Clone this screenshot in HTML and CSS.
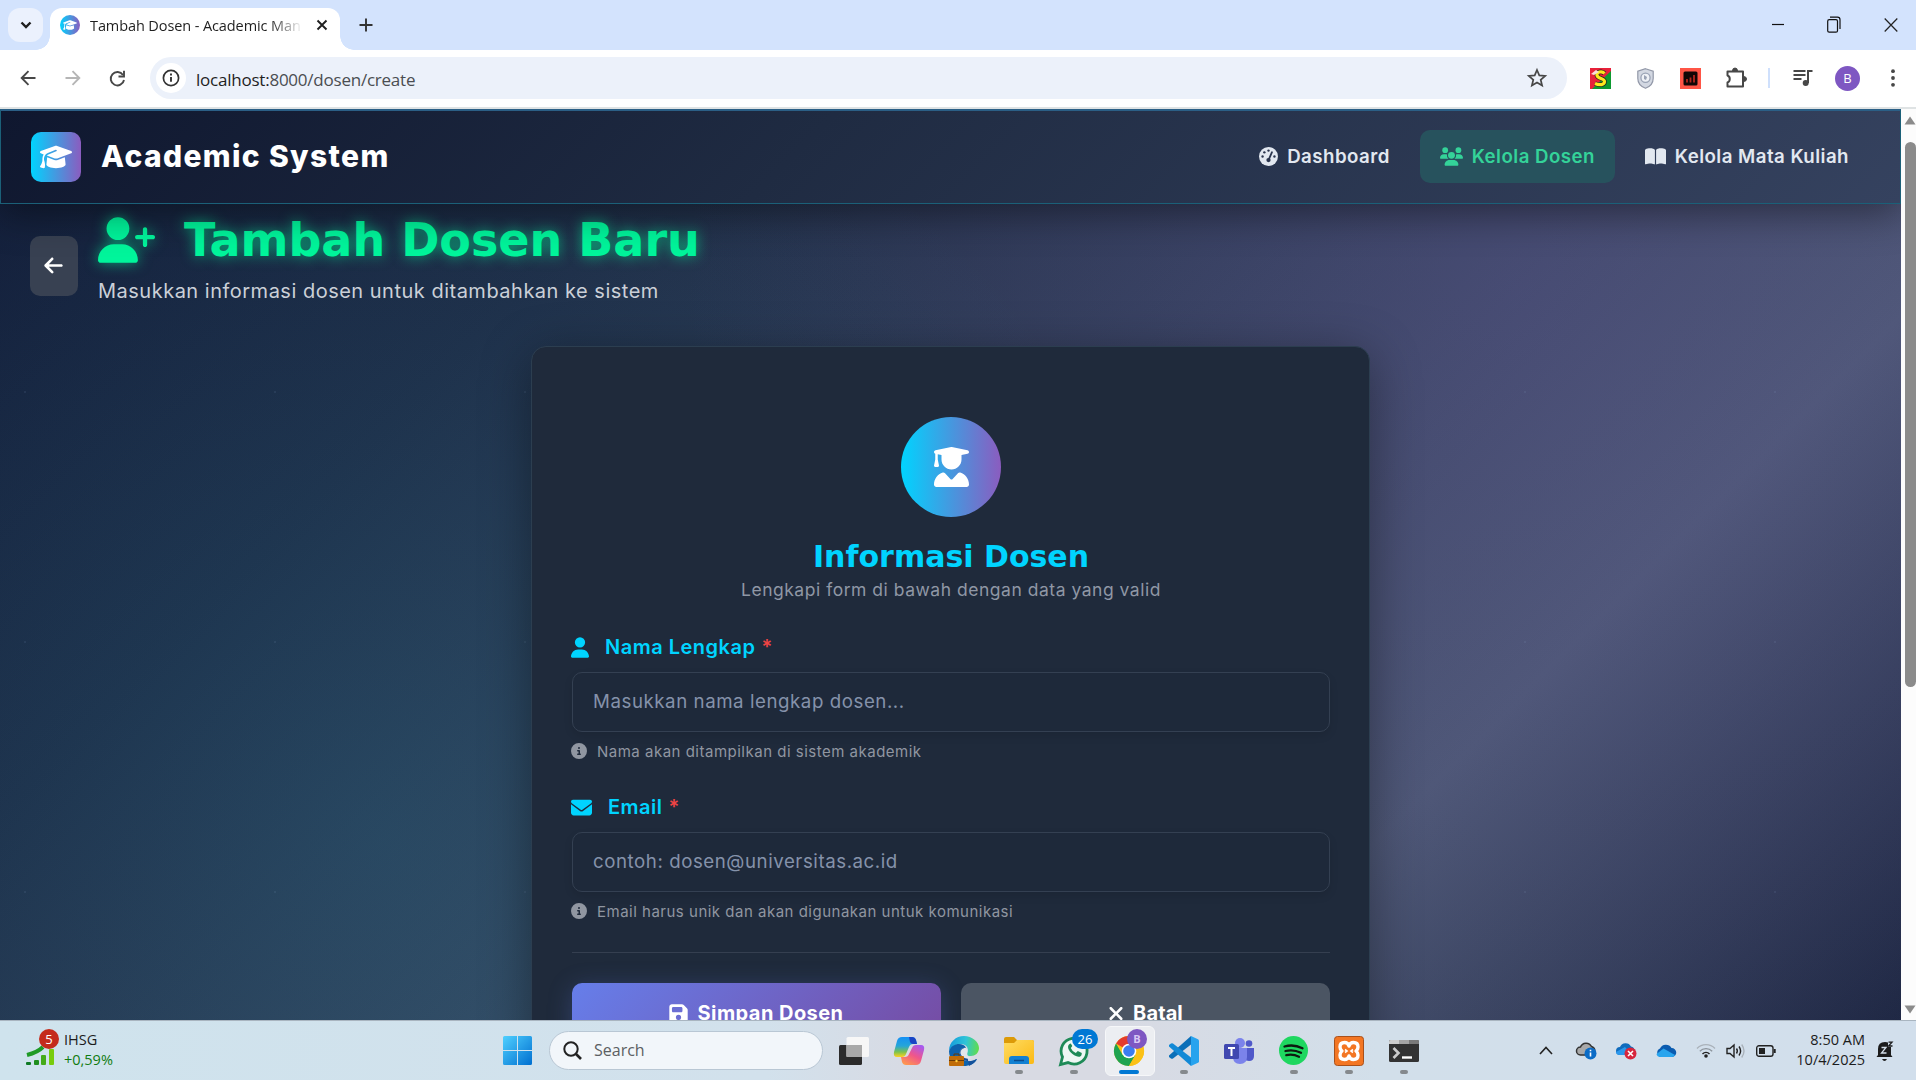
FILE: index.html
```html
<!DOCTYPE html>
<html lang="id">
<head>
<meta charset="utf-8">
<title>Tambah Dosen - Academic Management System</title>
<link rel="stylesheet" href="styles.css">
</head>
<body>
<svg class="defs" aria-hidden="true">
  <defs>
    <symbol id="cap" viewBox="0 0 640 512"><path d="M320 32c-8.1 0-16.1 1.4-23.7 4.1L15.8 137.4C6.3 140.9 0 149.9 0 160s6.3 19.1 15.8 22.6l57.9 20.9C57.3 229.3 48 259.8 48 291.9v28.1c0 28.4-10.8 57.7-22.3 80.8c-6.5 13-13.9 25.8-22.5 37.6C0 442.7-.9 448.3 .9 453.4s6 8.9 11.2 10.2l64 16c4.2 1.1 8.7 .3 12.4-2s6.3-6.1 7.1-10.4c8.6-42.8 4.3-81.2-2.1-108.7C90.3 344.3 86 329.8 80 316.5V291.9c0-30.2 10.2-58.7 27.9-81.5c12.9-15.5 29.6-28 49.2-35.7l157-61.7c8.2-3.2 17.5 .8 20.7 9s-.8 17.5-9 20.7l-157 61.7c-12.4 4.9-23.3 12.4-32.2 21.6l159.6 57.6c7.6 2.7 15.6 4.1 23.7 4.1s16.1-1.4 23.7-4.1L624.2 182.6c9.5-3.4 15.8-12.5 15.8-22.6s-6.3-19.1-15.8-22.6L343.7 36.1C336.1 33.4 328.1 32 320 32zM128 408c0 35.3 86 72 192 72s192-36.7 192-72L496.7 262.6 354.5 314c-11.1 4-22.8 6-34.5 6s-23.5-2-34.5-6L143.3 262.6 128 408z"/></symbol>
    <symbol id="info" viewBox="0 0 512 512"><path d="M256 512A256 256 0 1 0 256 0a256 256 0 1 0 0 512zM216 336h24V272H216c-13.3 0-24-10.7-24-24s10.7-24 24-24h48c13.3 0 24 10.7 24 24v88h8c13.3 0 24 10.7 24 24s-10.7 24-24 24H216c-13.3 0-24-10.7-24-24s10.7-24 24-24zm40-208a32 32 0 1 1 0 64 32 32 0 1 1 0-64z"/></symbol>
    <linearGradient id="brand" x1="0" y1="0" x2="1" y2="0"><stop offset="0" stop-color="#00d4ff"/><stop offset="1" stop-color="#8b5cbf"/></linearGradient>
    <linearGradient id="winblue" x1="0" y1="0" x2="1" y2="1"><stop offset="0" stop-color="#4fd0ff"/><stop offset="1" stop-color="#006fd0"/></linearGradient>
    <linearGradient id="cop1" x1="0" y1="0" x2="0" y2="1"><stop offset="0" stop-color="#1590f5"/><stop offset=".45" stop-color="#26a5d8"/><stop offset=".75" stop-color="#7cc24e"/><stop offset="1" stop-color="#ffd21e"/></linearGradient>
    <linearGradient id="cop2" x1=".8" y1="0" x2=".2" y2="1"><stop offset="0" stop-color="#a65af0"/><stop offset=".5" stop-color="#f0568a"/><stop offset="1" stop-color="#ff9a4d"/></linearGradient>
    <linearGradient id="edge1" x1="0" y1=".3" x2="1" y2=".4"><stop offset="0" stop-color="#159bdc"/><stop offset=".55" stop-color="#2fc4d8"/><stop offset="1" stop-color="#5fdc50"/></linearGradient>
    <linearGradient id="folder" x1="0" y1="0" x2="1" y2="1"><stop offset="0" stop-color="#ffdc62"/><stop offset="1" stop-color="#fbb914"/></linearGradient>
  </defs>
</svg>

<div class="tabstrip">
  <div class="tab-search"><svg width="12" height="8" viewBox="0 0 12 8"><path d="M1.500 1.500 6 6l4.500-4.500" fill="none" stroke="#1f1f1f" stroke-width="2.400"/></svg></div>
  <div class="tab">
    <svg class="favicon" width="20" height="20" viewBox="0 0 20 20"><circle cx="10" cy="10" r="10" fill="url(#brand)"/><use href="#cap" x="3" y="4.500" width="14" height="11" fill="#fff"/></svg>
    <span class="tab-title">Tambah Dosen - Academic Man</span>
    <svg width="12" height="12" viewBox="0 0 12 12"><path d="M1.500 1.500l9 9m0-9l-9 9" stroke="#1f1f1f" stroke-width="1.900"/></svg>
  </div>
  <svg class="new-tab" width="14" height="14" viewBox="0 0 14 14"><path d="M7 .5v13M.5 7h13" stroke="#333" stroke-width="1.900"/></svg>
  <div class="window-controls">
    <svg width="12" height="13" viewBox="0 0 12 13"><path d="M0 5.500h12" stroke="#111" stroke-width="1.200"/></svg>
    <svg width="14" height="18" viewBox="0 0 14 18"><rect x=".7" y="3.700" width="9.800" height="12.500" rx="1.500" fill="none" stroke="#111" stroke-width="1.200"/><path d="M3 1.200h7.500q2.500 0 2.500 2.500V13" fill="none" stroke="#111" stroke-width="1.200"/></svg>
    <svg width="14" height="17" viewBox="0 0 14 17"><path d="M.7 1.500l12.600 13M13.300 1.500L.7 14.500" stroke="#222" stroke-width="1.200"/></svg>
  </div>
</div>

<div class="toolbar">
  <span class="slot"><svg width="16" height="16" viewBox="0 0 16 16"><path d="M15.500 8H2M8.500 1.200 1.700 8l6.800 6.800" fill="none" stroke="#474747" stroke-width="1.900"/></svg></span>
  <span class="slot"><svg width="16" height="16" viewBox="0 0 16 16"><path d="M.5 8H14M7.500 1.200 14.300 8l-6.800 6.800" fill="none" stroke="#b5b5b5" stroke-width="1.900"/></svg></span>
  <span class="slot"><svg width="17" height="17" viewBox="0 0 17 17"><path d="M14 5A6.700 6.700 0 1 0 15 10" fill="none" stroke="#474747" stroke-width="1.900"/><path d="M15 .8V6.500H9.500" fill="none" stroke="#474747" stroke-width="1.900"/></svg></span>
  <div class="omnibox">
    <span class="site-info"><svg width="18" height="18" viewBox="0 0 18 18"><circle cx="9" cy="9" r="7.600" fill="none" stroke="#333" stroke-width="1.700"/><path d="M9 8v4.800M9 4.600v1.900" stroke="#333" stroke-width="1.900"/></svg></span>
    <span class="url"><b>localhost:</b>8000/dosen/create</span>
    <svg class="star" width="20" height="20" viewBox="0 0 20 20"><path d="M10 2l2.300 5.400 5.900.5-4.500 3.900 1.400 5.700L10 14.500l-5.100 3 1.400-5.700L1.800 7.900l5.900-.5z" fill="none" stroke="#474747" stroke-width="1.700"/></svg>
  </div>
  <span class="slot"><svg width="21" height="21" viewBox="0 0 21 21"><path d="M0 0h21v21H0z" fill="#e8213a"/><path d="M21 3v18H2z" fill="#0d9a30"/><path d="M14.500 5.500C12 2.500 6 4 7 7.500s7.500 2.500 7.500 6-5 4-9.500 2" fill="none" stroke="#222" stroke-width="4.600"/><path d="M14.500 5.500C12 2.500 6 4 7 7.500s7.500 2.500 7.500 6-5 4-9.500 2" fill="none" stroke="#ffe81c" stroke-width="3.200"/><path d="M1 6l5-4 3 2-5 3z" fill="#f8dcd8"/></svg></span>
  <span class="slot"><svg width="17" height="21" viewBox="0 0 17 21"><path d="M8.500.7l7.700 2.600v7c0 5-3.500 8.500-7.700 10C4.300 18.800.8 15.300.8 10.300v-7z" fill="#d3d8e2" stroke="#9298a8" stroke-width="1.200"/><circle cx="8.500" cy="9.700" r="4.600" fill="#eef1f6" stroke="#9aa3b5" stroke-width="1.300"/><path d="M7 7l3 2-1 3-2-1z" fill="#9aa3b5"/></svg></span>
  <span class="slot"><svg width="21" height="21" viewBox="0 0 21 21"><rect width="21" height="21" fill="#ff5546"/><rect x="3.500" y="3.500" width="14" height="14" rx="1.500" fill="#120606"/><path d="M7 11v3.500M10.500 9.500v5M14 7v7.500" stroke="#b3261e" stroke-width="1.800"/></svg></span>
  <span class="slot"><svg width="22" height="22" viewBox="0 0 22 22"><path d="M2.500 4.500H18V19.500H2.500V15.500C5.500 14.500 5.500 9.500 2.500 8.500z" fill="none" stroke="#474747" stroke-width="2" stroke-linejoin="round"/><path d="M7.500 4a2.500 3 0 0 1 5 0M18.500 9.500a3 2.500 0 0 1 0 5" fill="#474747" stroke="#474747"/></svg></span>
  <span class="divider"></span>
  <span class="slot"><svg width="20" height="18" viewBox="0 0 20 18"><path d="M.5 2h12M.5 6h12M.5 10h8" stroke="#474747" stroke-width="1.900"/><path d="M15 14V2h4.500" fill="none" stroke="#474747" stroke-width="2"/><circle cx="12.700" cy="14" r="3" fill="#474747"/></svg></span>
  <span class="slot"><span class="avatar">B</span></span>
  <span class="slot"><svg width="4" height="18" viewBox="0 0 4 18"><circle cx="2" cy="2.200" r="1.900" fill="#474747"/><circle cx="2" cy="9" r="1.900" fill="#474747"/><circle cx="2" cy="15.800" r="1.900" fill="#474747"/></svg></span>
</div>

<div class="viewport">
  <div class="page">
    <nav class="navbar">
      <span class="logo"><svg width="32" height="26" fill="#fff"><use href="#cap"/></svg></span>
      <span class="brand">Academic System</span>
      <div class="links">
        <a class="link link-dashboard"><svg width="19" height="19" viewBox="0 0 512 512"><circle cx="256" cy="256" r="256" fill="currentColor"/><g fill="#29344d"><circle cx="256" cy="96" r="32"/><circle cx="144" cy="144" r="32"/><circle cx="96" cy="256" r="32"/><circle cx="416" cy="256" r="32"/><circle cx="256" cy="352" r="58"/></g><path d="M256 352 350 140" stroke="#29344d" stroke-width="48" stroke-linecap="round"/></svg><span>Dashboard</span></a>
        <a class="link link-active"><svg width="23" height="19" viewBox="0 0 640 512" fill="currentColor"><circle cx="144" cy="80" r="80"/><circle cx="512" cy="80" r="80"/><path d="M0 298.700C0 239.800 47.800 192 106.700 192h42.700c15.900 0 31 3.500 44.600 9.700a128 128 0 0 0 40.700 118.300H21.300C9.600 320 0 310.400 0 298.700zM405.300 320h.7a128 128 0 0 0 40.700-118.300c13.600-6.300 28.700-9.700 44.600-9.700h42.700C592.200 192 640 239.800 640 298.700c0 11.800-9.600 21.300-21.300 21.300z"/><circle cx="320" cy="224" r="96"/><path d="M128 485.300C128 411.700 187.700 352 261.300 352h117.300C452.300 352 512 411.700 512 485.300c0 14.700-11.900 26.700-26.700 26.700H154.700c-14.700 0-26.700-11.900-26.700-26.700z"/></svg><span>Kelola Dosen</span></a>
        <a class="link link-courses"><svg width="21" height="19" viewBox="0 0 576 512" fill="currentColor"><path d="M249.600 471.500c10.800 3.800 22.400-4.100 22.400-15.500V78.600c0-4.200-1.600-8.400-5-11C247.400 52 202.400 32 144 32C93.500 32 46.300 45.300 18.100 56.100C6.800 60.500 0 71.700 0 83.800V454.100c0 11.900 12.800 20.200 24.100 16.500C55.600 460.100 105.500 448 144 448c33.900 0 79 14 105.600 23.500zm76.800 0C353 462 398.100 448 432 448c38.500 0 88.400 12.100 119.900 22.600c11.300 3.800 24.100-4.600 24.100-16.500V83.800c0-12.100-6.800-23.300-18.100-27.600C529.700 45.300 482.500 32 432 32c-58.400 0-103.400 20-123 35.600c-3.300 2.600-5 6.800-5 11V456c0 11.400 11.700 19.300 22.400 15.500z"/></svg><span>Kelola Mata Kuliah</span></a>
      </div>
    </nav>

    <header class="page-head">
      <a class="back"><svg width="19" height="21" viewBox="0 0 448 512" fill="#fff"><path d="M9.400 233.400c-12.500 12.500-12.500 32.800 0 45.300l160 160c12.500 12.500 32.800 12.500 45.300 0s12.500-32.800 0-45.300L109.200 288 416 288c17.700 0 32-14.300 32-32s-14.300-32-32-32l-306.700 0L214.600 118.600c12.500-12.500 12.500-32.800 0-45.300s-32.800-12.500-45.300 0l-160 160z"/></svg></a>
      <div>
        <h1><svg width="57" height="46" viewBox="0 0 640 512" fill="#00f59b"><path d="M96 128a128 128 0 1 1 256 0A128 128 0 1 1 96 128zM0 482.300C0 383.800 79.800 304 178.300 304h91.400C368.200 304 448 383.800 448 482.300c0 16.400-13.300 29.700-29.700 29.700H29.700C13.300 512 0 498.700 0 482.300zM504 312V248H440c-13.300 0-24-10.700-24-24s10.700-24 24-24h64V136c0-13.300 10.700-24 24-24s24 10.700 24 24v64h64c13.300 0 24 10.700 24 24s-10.700 24-24 24H552v64c0 13.300-10.700 24-24 24s-24-10.700-24-24z"/></svg><span>Tambah Dosen Baru</span></h1>
        <p class="lead">Masukkan informasi dosen untuk ditambahkan ke sistem</p>
      </div>
    </header>

    <main class="card">
      <div class="badge"><svg width="35" height="40" viewBox="0 0 448 512" fill="#fff"><path d="M219.300 .5c3.100-.6 6.300-.6 9.400 0l200 40C439.900 42.700 448 52.600 448 64s-8.100 21.300-19.300 23.500L352 102.900V160c0 70.700-57.300 128-128 128s-128-57.300-128-128V102.900L48 93.300v65.100l15.700 78.400c.9 4.700-.3 9.600-3.300 13.300s-7.600 5.900-12.400 5.900H16c-4.800 0-9.300-2.100-12.400-5.900s-4.300-8.600-3.300-13.300L16 158.400V86.600C6.500 83.300 0 74.300 0 64C0 52.600 8.100 42.700 19.300 40.500l200-40zM111.900 327.700c10.500-3.400 21.800 .4 29.400 8.500l71 75.500c6.300 6.700 17 6.700 23.300 0l71-75.500c7.600-8.100 18.900-11.900 29.400-8.500C401 348.600 448 409.400 448 481.300c0 17-13.800 30.700-30.700 30.700H30.700C13.800 512 0 498.200 0 481.300c0-71.900 47-132.700 111.900-153.600z"/></svg></div>
      <h2>Informasi Dosen</h2>
      <p class="card-sub">Lengkapi form di bawah dengan data yang valid</p>

      <div class="field">
        <div class="label"><svg width="18" height="21" viewBox="0 0 448 512" fill="currentColor"><path d="M224 256A128 128 0 1 0 224 0a128 128 0 1 0 0 256zm-45.700 48C79.800 304 0 383.800 0 482.300C0 498.700 13.300 512 29.700 512H418.300c16.400 0 29.700-13.300 29.700-29.700C448 383.800 368.200 304 269.700 304H178.300z"/></svg><span>Nama Lengkap</span><i>*</i></div>
        <div class="input">Masukkan nama lengkap dosen...</div>
        <div class="hint"><svg width="16" height="16" fill="currentColor"><use href="#info"/></svg><span>Nama akan ditampilkan di sistem akademik</span></div>
      </div>
      <div class="field">
        <div class="label"><svg width="21" height="21" viewBox="0 0 512 512" fill="currentColor"><path d="M48 64C21.500 64 0 85.500 0 112c0 15.100 7.100 29.300 19.200 38.400L236.800 313.600c11.400 8.500 27 8.500 38.400 0L492.800 150.400c12.100-9.100 19.200-23.300 19.200-38.400c0-26.500-21.500-48-48-48H48zM0 176V384c0 35.300 28.700 64 64 64H448c35.300 0 64-28.700 64-64V176L294.400 339.200c-22.800 17.100-54 17.100-76.800 0L0 176z"/></svg><span>Email</span><i>*</i></div>
        <div class="input">contoh: dosen@universitas.ac.id</div>
        <div class="hint"><svg width="16" height="16" fill="currentColor"><use href="#info"/></svg><span>Email harus unik dan akan digunakan untuk komunikasi</span></div>
      </div>

      <div class="actions">
        <a class="btn btn-save"><svg width="19" height="21" viewBox="0 0 448 512" fill="#fff"><path d="M64 32C28.700 32 0 60.700 0 96V416c0 35.300 28.700 64 64 64H384c35.300 0 64-28.700 64-64V173.300c0-17-6.700-33.300-18.700-45.300L352 50.700C340 38.700 323.700 32 306.700 32H64zm0 96c0-17.700 14.300-32 32-32H288c17.700 0 32 14.300 32 32v64c0 17.700-14.300 32-32 32H96c-17.700 0-32-14.300-32-32V128zM224 288a64 64 0 1 1 0 128 64 64 0 1 1 0-128z"/></svg><span>Simpan Dosen</span></a>
        <a class="btn btn-cancel"><svg width="16" height="21" viewBox="0 0 384 512" fill="#fff"><path d="M342.600 150.600c12.500-12.500 12.500-32.800 0-45.300s-32.800-12.500-45.300 0L192 210.700 86.600 105.400c-12.500-12.500-32.800-12.500-45.300 0s-12.500 32.800 0 45.300L146.700 256 41.400 361.400c-12.500 12.500-12.500 32.800 0 45.300s32.800 12.500 45.300 0L192 301.300 297.400 406.600c12.500 12.500 32.800 12.500 45.300 0s12.500-32.800 0-45.300L237.300 256 342.600 150.600z"/></svg><span>Batal</span></a>
      </div>
    </main>
  </div>
  <div class="scrollbar">
    <svg width="12" height="9" viewBox="0 0 12 9"><path d="M6 .5 11.500 8.500H.5z" fill="#8b8b8b"/></svg>
    <span class="thumb"></span>
    <svg class="down" width="12" height="9" viewBox="0 0 12 9"><path d="M6 8.500 11.500.5H.5z" fill="#8b8b8b"/></svg>
  </div>
</div>

<div class="taskbar">
  <div class="widget">
    <div class="widget-icon"><svg width="30" height="36" viewBox="0 0 30 36"><path d="M1 25c8-2 12-4 16-8" fill="none" stroke="#1f9a26" stroke-width="4"/><rect x="0" y="32" width="5" height="3" rx="1" fill="#0f7a24"/><rect x="8" y="30" width="5" height="5" rx="1" fill="#1f8f1f"/><rect x="15" y="25" width="5" height="10" rx="1" fill="#44ab18"/><rect x="23" y="19" width="5" height="16" rx="1" fill="#78cc0c"/></svg><span class="count count-red">5</span></div>
    <div class="widget-text"><span>IHSG</span><span class="up">+0,59%</span></div>
  </div>
  <span class="app"><svg width="29" height="29" viewBox="0 0 29 29" fill="url(#winblue)"><path d="M1.500 0H14v14H0V1.500A1.500 1.500 0 0 1 1.500 0zM15 0h12.500A1.500 1.500 0 0 1 29 1.500V14H15zM0 15h14v14H1.500A1.500 1.500 0 0 1 0 27.500zM15 15h14v12.500a1.500 1.500 0 0 1-1.500 1.500H15z"/></svg></span>
  <div class="search"><svg width="19" height="19" viewBox="0 0 19 19"><circle cx="8" cy="8" r="6.700" fill="none" stroke="#222" stroke-width="2"/><path d="M13 13l5 5" stroke="#222" stroke-width="2.600"/></svg><span>Search</span></div>
  <span class="app"><svg width="30" height="28" viewBox="0 0 30 28"><rect x="0" y="8" width="23" height="20" rx="1.500" fill="#2b2b2b"/><rect x="7.500" y="0" width="22.500" height="20" rx="1.500" fill="#f7f7f7"/><rect x="7.500" y="8" width="15.500" height="12" fill="#a9a9a9"/></svg></span>
  <span class="app"><svg width="30" height="28" viewBox="0 0 30 28"><path d="M8 0h10q3 0 4 3l1 4h-4q-3 0-4 3l-3 7q-1 3-4 3H3q-4 0-3-5L3 4q1-4 5-4z" fill="url(#cop1)"/><path d="M15 0h3q3 0 4 3l1 4h-4q-2 0-3-2z" fill="#1a44c4"/><path d="M22 28H12q-3 0-4-3l-1-5h4q3 0 4-3l3-6q1-3 4-3h5q4 0 3 5l-3 11q-1 4-5 4z" fill="url(#cop2)"/></svg></span>
  <span class="app"><svg width="30" height="30" viewBox="0 0 30 30"><path d="M0 15C0 6 7 0 15 0s15 6 15 12c0 5-4 8-8 8-5 0-5-2-3.500-4C20 12 17 8 12 8S2 11 0 15z" fill="url(#edge1)"/><path d="M0 15c2-5 6-7 10-7 3 0 6 1 7 4-4-1-7 2-6 7 1 4 6 7 11 6 2 0 5-2 6-2-2 5-8 7-13 7C6 30 0 23 0 15z" fill="#0d62ad"/><path d="M17 12c-4-1-7 2-6 7 1 4 6 7 11 6 2 0 4-1 6-2-3 4-6 6-8 7" fill="#14509a"/><path d="M17 12c-3-.5-6 2-5.500 5.500C12.500 21 17 24 23 22q-6-1-4.500-6 .5-3-1.500-4z" fill="#e3e6ec"/><rect x="0" y="20" width="15" height="10" rx="1" fill="#c06c08"/><path d="M5 20v-2h5v2M0 24.500h15" fill="none" stroke="#693a05"/><circle cx="7.500" cy="25" r="1.200" fill="#ffcf40"/></svg></span>
  <span class="app"><svg width="30" height="27" viewBox="0 0 30 27"><path d="M0 2q0-2 2-2h8l3 3h15q2 0 2 2v5H0z" fill="#dc9a08"/><path d="M0 6h10l3-3h15q2 0 2 2v20q0 2-2 2H2q-2 0-2-2z" fill="url(#folder)"/><path d="M5 27v-5q0-3 3-3h14q3 0 3 3v5z" fill="#1280d2"/><path d="M10 23.500h10" stroke="#0a4b8c" stroke-width="1.500"/></svg><span class="running"></span></span>
  <span class="app"><svg width="30" height="30" viewBox="0 0 30 30"><path d="M1.500 28.500l2-7.500A13 13 0 1 1 9 26.600z" fill="#eef7f4" stroke="#1e8a57" stroke-width="2.800"/><path d="M10.500 8c-3 2-1 7 3 10s8 4 9 1l.3-2-4-2-2 2q-4-2-5-5l1.500-2L11.800 7.600z" fill="#1e8a57"/></svg><span class="count count-blue">26</span><span class="running"></span></span>
  <span class="app app-active"><svg width="30" height="30" viewBox="0 0 30 30"><circle cx="15" cy="15" r="15" fill="#fbc116"/><path d="M15 15L2 7.500A15 15 0 0 1 28 7.500H15z" fill="#e33b2e"/><path d="M2 7.500A15 15 0 0 0 15 30L21.500 18.700 8.500 18.700z" fill="#1fa350"/><path d="M15 7.500H28A15 15 0 0 1 15 30l6.500-11z" fill="#fbc116"/><circle cx="15" cy="15" r="7.300" fill="#fff"/><circle cx="15" cy="15" r="5.800" fill="#3c7df0"/></svg><span class="count count-purple">B</span><span class="running running-active"></span></span>
  <span class="app"><svg width="30" height="30" viewBox="0 0 30 30"><path d="M22 0l7 3.200q1 .5 1 1.500v20.600q0 1-1 1.500L22 30z" fill="#27a3ee"/><path d="M0 19.500L22 0v8.500L4 22.500q-1 .7-2 0L0 21z" fill="#0b6fb8"/><path d="M0 10.500L22 30v-8.500L4 7.500q-1-.7-2 0L0 9z" fill="#1289d6"/></svg><span class="running"></span></span>
  <span class="app"><svg width="30" height="26" viewBox="0 0 30 26"><circle cx="16" cy="5" r="5" fill="#7b83eb"/><circle cx="25" cy="5.500" r="3.300" fill="#5059c9"/><path d="M20 10h10v8q0 5-5 5-3 0-5-2z" fill="#5059c9"/><path d="M9 10h14v9q0 7-7 7t-7-7z" fill="#7b83eb"/><rect x="0" y="6" width="15" height="15" rx="1.500" fill="#4048b0"/><path d="M4 10h7M7.500 10v8" stroke="#fff" stroke-width="2"/></svg></span>
  <span class="app"><svg width="29" height="29" viewBox="0 0 29 29"><circle cx="14.500" cy="14.500" r="14.500" fill="#1ed760"/><path d="M5.500 10.500q9-2.700 18 1.700M6.500 15q8-2 15.500 1.800M7.300 19.200q6.500-1.500 12.700 1.500" fill="none" stroke="#0d1a10" stroke-width="2.300" stroke-linecap="round"/></svg><span class="running"></span></span>
  <span class="app"><svg width="30" height="30" viewBox="0 0 30 30"><rect x=".5" y=".5" width="29" height="29" rx="3" fill="#f37623" stroke="#a9501a"/><path d="M15 10q-1-3.500-4.500-3.500Q6 6.500 6 11q0 2.500 2 4-2 1.500-2 4 0 4.500 4.500 4.500Q14 23.500 15 20q1 3.500 4.500 3.500Q24 23.500 24 19q0-2.500-2-4 2-1.500 2-4 0-4.500-4.500-4.500Q16 6.500 15 10z" fill="none" stroke="#fff" stroke-width="3.400" stroke-linejoin="round"/><path d="M11 13.500l2 1.500-2 1.500M19 13.500L17 15l2 1.500" fill="none" stroke="#fff" stroke-width="1.600"/></svg><span class="running"></span></span>
  <span class="app"><svg width="30" height="22" viewBox="0 0 30 22"><rect width="30" height="22" rx="1.500" fill="#333"/><path d="M0 1.500Q0 0 1.500 0H10v4H0z" fill="#cfcfcf"/><path d="M10 0h10v4H10z" fill="#a5a5a5"/><path d="M20 0h8.500Q30 0 30 1.500V4H20z" fill="#7a7a7a"/><path d="M4.500 8l5 5-5 5" fill="none" stroke="#ccc" stroke-width="2.600"/><path d="M13 17.500h10" stroke="#fff" stroke-width="2.400"/></svg><span class="running"></span></span>

  <div class="tray">
    <span class="tray-slot"><svg width="14" height="9" viewBox="0 0 14 9"><path d="M1 8l6-6.500L13 8" fill="none" stroke="#222" stroke-width="1.600"/></svg></span>
    <span class="tray-slot"><svg width="21" height="18" viewBox="0 0 21 18"><path d="M4.500 13a4 4 0 0 1 0-8A6 6 0 0 1 15.500 4.500 4.500 4.500 0 0 1 16 13z" fill="#a9a9a9" stroke="#333" stroke-width="1.500"/><circle cx="14.500" cy="11.500" r="6" fill="#0c6cc6"/><path d="M14.500 10.500v4M14.500 7.700v1.600" stroke="#fff" stroke-width="1.600"/></svg></span>
    <span class="tray-slot"><svg width="21" height="18" viewBox="0 0 21 18"><path d="M4 13a4 4 0 0 1 0-8A6 6 0 0 1 15 4.500 4.500 4.500 0 0 1 16 13z" fill="#0f6cbd"/><path d="M0 10l9-5 7 8H4q-4 0-4-3z" fill="#2b98ec"/><circle cx="14.500" cy="11.500" r="6" fill="#d7263d"/><path d="M12 9l5 5m0-5l-5 5" stroke="#fff" stroke-width="1.600"/></svg></span>
    <span class="tray-slot"><svg width="20" height="13" viewBox="0 0 20 13"><path d="M4.500 13a4.500 4.500 0 0 1-.5-8.500 6.500 6.500 0 0 1 11.500-.5A4.500 4.500 0 0 1 16 13z" fill="#0b5cb0"/><path d="M.5 10l7-5.500L19 11q-1 2-3 2H4.500Q1 13 .5 10z" fill="#29a5ee"/></svg></span>
    <span class="tray-slot tray-small tray-wifi"><svg width="20" height="15" viewBox="0 0 20 15"><path d="M1 5.500a12.500 12.500 0 0 1 18 0" fill="none" stroke="#aab2ba" stroke-width="1.300"/><path d="M3.800 8.300a8.700 8.700 0 0 1 12.400 0" fill="none" stroke="#8b939b" stroke-width="1.300"/><path d="M6.500 11a5 5 0 0 1 7 0" fill="none" stroke="#222" stroke-width="1.500"/><circle cx="10" cy="13" r="1.800" fill="#222"/></svg></span>
    <span class="tray-slot tray-small"><svg width="20" height="16" viewBox="0 0 20 16"><path d="M1 5.500h3L8 2v12l-4-3.500H1z" fill="none" stroke="#222" stroke-width="1.400"/><path d="M10.500 5.500q1.700 2.500 0 5M13 3.500q3.200 4.500 0 9" fill="none" stroke="#222" stroke-width="1.400"/><path d="M15.700 1.500q4.600 6.500 0 13" fill="none" stroke="#a9b1b9" stroke-width="1.300"/></svg></span>
    <span class="tray-slot tray-small"><svg width="20" height="12" viewBox="0 0 20 12"><rect x=".7" y=".7" width="16.300" height="10.600" rx="2.300" fill="none" stroke="#222" stroke-width="1.400"/><rect x="3" y="3" width="6" height="6" fill="#222"/><path d="M18.700 4v4" stroke="#222" stroke-width="2"/></svg></span>
    <div class="clock"><span>8:50 AM</span><span>10/4/2025</span></div>
    <svg class="bell" width="18" height="20" viewBox="0 0 18 20"><path d="M2 14V8q0-7 7-7 2 0 3 .5V6h3v8l1.500 2H.500z" fill="#1c1c1c"/><path d="M6 18h5q-1 2-2.500 2T6 18z" fill="#1c1c1c"/><path d="M5.500 6.500h4.500L5.500 12h5" fill="none" stroke="#d3dde8" stroke-width="1.300"/><path d="M12.500 1.200H16L12.500 5H16.500" fill="none" stroke="#1c1c1c" stroke-width="1.300"/></svg>
  </div>
</div>
</body>
</html>
```
FILE: styles.css
```css
* { box-sizing: border-box; margin: 0; padding: 0; }
body {
  width: 1916px;
  height: 1080px;
  overflow: hidden;
  display: flex;
  flex-direction: column;
  background: #fff;
  font-family: "Open Sans", "Noto Sans", sans-serif;
}
svg { display: block; flex: none; overflow: visible; }
.defs { width: 0; height: 0; position: absolute; }

/* browser window */
.tabstrip { height: 50px; background: #d3e3fd; display: flex; align-items: center; }
.tab-search {
  width: 35px; height: 34px; margin-left: 8px; border-radius: 12px; background: #ebf1fd;
  display: flex; align-items: center; justify-content: center;
}
.tab {
  position: relative; width: 290px; height: 42px; margin: 8px 0 0 7px; padding: 0 14px 8px 10px;
  background: #fff; border-radius: 12px 12px 0 0; display: flex; align-items: center;
}
.tab::before, .tab::after { content: ""; position: absolute; bottom: 0; width: 14px; height: 14px; }
.tab::before { left: -14px; background: radial-gradient(circle at 0 0, transparent 13.5px, #fff 14px); }
.tab::after { right: -14px; background: radial-gradient(circle at 100% 0, transparent 13.5px, #fff 14px); }
.tab-title {
  width: 210px; margin: 0 16px 0 10px; white-space: nowrap; font-size: 14.5px; letter-spacing: -.1px; color: #1f1f1f;
  -webkit-mask-image: linear-gradient(90deg, #000 180px, transparent 213px);
  mask-image: linear-gradient(90deg, #000 180px, transparent 213px);
}
.new-tab { margin-left: 19px; }
.window-controls { margin-left: auto; padding-right: 18px; display: flex; align-items: center; gap: 43px; }

.toolbar { height: 59px; padding: 0 1px 1px 5px; display: flex; align-items: center; border-bottom: 2px solid #dfe3e4; }
.slot { width: 45px; display: flex; justify-content: center; align-items: center; flex: none; }
.omnibox {
  width: 1417px; height: 42px; margin: 0 11px 0 10px; padding: 0 20px 0 6px; border-radius: 21px; background: #ecf1fa;
  display: flex; align-items: center;
}
.site-info { width: 30px; height: 30px; border-radius: 50%; background: #fff; display: flex; align-items: center; justify-content: center; }
.url { margin: 2px 0 0 10px; font-size: 17px; letter-spacing: -.23px; color: #4a4d51; white-space: nowrap; }
.url b { font-weight: 400; color: #1f1f1f; }
.star { margin-left: auto; }
.divider { width: 2px; height: 20px; margin: 0 10px; background: #cfe0fc; }
.avatar { width: 25px; height: 25px; border-radius: 50%; background: #7e57c2; color: #fff; font-size: 13px; line-height: 25px; text-align: center; }

.viewport { height: 911px; display: flex; }
.page {
  position: relative; width: 1901px; overflow: hidden; font-family: "Inter", sans-serif;
  background:
    radial-gradient(circle 1.5px at 25px 33px, rgba(150, 180, 220, .18), transparent) 0 0 / 250px 250px,
    radial-gradient(circle at 20% 80%, rgba(20, 200, 230, .11), transparent 50%),
    radial-gradient(circle at 80% 20%, rgba(125, 80, 200, .15), transparent 50%),
    linear-gradient(135deg, #121b37 0%, #1f2b45 25%, #34425b 50%, #4c5873 75%, #1f2844 100%);
}
.scrollbar { width: 15px; background: #fcfcfc; display: flex; flex-direction: column; align-items: flex-end; padding: 7px 0 6px 3px; }
.thumb { width: 11px; height: 545px; margin-top: 17px; border-radius: 6px; background: #8b8b8b; }
.down { margin-top: auto; }

/* navigation */
.navbar {
  position: relative; z-index: 2; height: 95px; padding: 0 31px 0 30px; display: flex; align-items: center;
  background: linear-gradient(135deg, #0f172f 0%, #1f2b42 42%, #35425f 100%);
  border: 1px solid #1b6078; border-top: 2px solid #2b5f86; box-shadow: 0 8px 40px rgba(0, 0, 0, .45);
}
.logo { width: 50px; height: 50px; border-radius: 10px; background: linear-gradient(90deg, #00d4ff, #8b5cbf); display: flex; align-items: center; justify-content: center; }
.brand { margin: -2px 0 0 20px; font-size: 30px; font-weight: 800; letter-spacing: 1.35px; color: #fff; white-space: nowrap; }
.links { margin: -2px 0 0 auto; display: flex; gap: 10px; }
.link { height: 53px; padding: 0 20px; display: flex; align-items: center; gap: 9px; border-radius: 10px; font-size: 18.700px; font-weight: 600; letter-spacing: .45px; color: #e2e8f0; white-space: nowrap; }
.link-active { background: #27525d; color: #34d399; }

/* heading */
.page-head { margin: 6px 30px 39px; height: 97px; display: flex; gap: 20px; }
.back { width: 48px; height: 60px; margin-top: 26px; padding: 0 1px 2px 0; border-radius: 10px; background: #384152; display: flex; align-items: center; justify-content: center; }
h1 {
  height: 60px; display: flex; align-items: center; gap: 29px; white-space: nowrap;
  font: 700 46px/60px "DejaVu Sans", sans-serif; color: #00f59b; text-shadow: 0 0 14px rgba(0, 245, 155, .65);
}
h1 svg { filter: drop-shadow(0 0 7px rgba(0, 245, 155, .6)); }
.lead { margin-top: 5px; font-size: 20px; line-height: 32px; letter-spacing: .5px; color: #cbd0d8; white-space: nowrap; }

/* form card */
.card {
  width: 839px; height: 800px; margin: 0 auto; padding: 70px 39px 0 40px; border: 1px solid #2c3e50; border-radius: 15px;
  background: #1f2a3b; box-shadow: 0 10px 50px rgba(0, 0, 0, .38);
}
.badge { width: 100px; height: 100px; margin: 0 auto; border-radius: 50%; background: linear-gradient(90deg, #00d4ff, #8b5cbf); display: flex; align-items: center; justify-content: center; }
h2 { margin-top: 22px; text-align: center; font: 700 30px/36px "DejaVu Sans", sans-serif; color: #00d4ff; }
.card-sub { margin: 3px 0 30px; text-align: center; font-size: 17.500px; line-height: 24px; letter-spacing: .52px; color: #8f97a5; }
.field { margin-bottom: 29px; }
.label { height: 30px; display: flex; align-items: center; font-size: 20px; font-weight: 600; letter-spacing: .5px; color: #00d4ff; }
.label svg { margin-left: -1px; }
.label span { margin-left: 16px; }
.label i { margin-left: 6px; font-style: normal; color: #ef4444; }
.input { height: 60px; margin-top: 10px; padding: 0 20px; border: 1px solid #344052; border-radius: 10px; background: #1e293a; box-shadow: 0 4px 8px rgba(0, 0, 0, .1); font-size: 18.700px; line-height: 57px; letter-spacing: .55px; color: #8592aa; }
.hint { height: 24px; margin: 7px 0 0 -1px; display: flex; align-items: center; gap: 10px; font-size: 15px; letter-spacing: .5px; color: #9096a1; }
.actions { padding-top: 30px; border-top: 1px solid #353f50; display: flex; gap: 20px; }
.btn { flex: 1; height: 60px; border-radius: 10px; display: flex; align-items: center; justify-content: center; gap: 9px; font-size: 20px; font-weight: 700; letter-spacing: .45px; color: #fff; }
.btn-save { background: linear-gradient(135deg, #667eea, #764ba2); box-shadow: 0 4px 25px rgba(102, 126, 234, .25); }
.btn-cancel { background: #4b5563; letter-spacing: .1px; }

/* taskbar */
.taskbar {
  height: 60px; flex: none; display: flex; align-items: center; border-top: 1px solid #a9b5c0; color: #1c1c1c;
  background: linear-gradient(90deg, #cfe3ed 0%, #d2e1ec 40%, #d8dae3 48%, #d8dae3 58%, #d2dfea 72%, #d2dfec 100%);
}
.widget { width: 490px; padding-left: 26px; display: flex; align-items: center; }
.widget-icon { position: relative; width: 30px; height: 36px; margin: -5px 8px 0 0; }
.widget-text { margin-top: -2px; display: flex; flex-direction: column; align-items: flex-start; font-size: 14.500px; line-height: 20px; }
.up { color: #107c10; }
.app { position: relative; width: 55px; height: 60px; display: flex; align-items: center; justify-content: center; flex: none; }
.search {
  width: 274px; height: 39px; margin: 0 3px 1px 4px; padding-left: 13px; border-radius: 20px; border: 1px solid #b9c7d4; background: #f2f6fa;
  display: flex; align-items: center; gap: 12px; font-size: 16px; color: #5c5f63;
}
.count { position: absolute; font-size: 13px; text-align: center; color: #fff; border-radius: 10px; }
.count-red { left: 13px; top: -1px; width: 20px; height: 20px; line-height: 20px; background: #c42b1c; }
.count-blue { left: 26px; top: 8px; width: 26px; height: 20px; line-height: 20px; background: #0078d4; }
.count-purple { left: 26px; top: 8px; width: 20px; height: 20px; line-height: 20px; background: #7e57c2; color: #d9c8f5; font-size: 11px; font-weight: 700; }
.running { position: absolute; left: 24px; top: 49px; width: 8px; height: 4px; border-radius: 2px; background: #85898d; }
.running-active { left: 18px; width: 20px; background: #0078d4; }
.app-active::before { content: ""; position: absolute; left: 4px; top: 5px; width: 48px; height: 48px; border-radius: 6px; background: #eceef2; border: 1px solid #f6f7f9; }
.app-active svg { position: relative; }
.tray { flex: 1; padding-left: 95px; display: flex; align-items: center; }
.tray-slot { width: 40px; display: flex; justify-content: center; flex: none; }
.tray-small { width: 30px; }
.tray-wifi { margin-left: 5px; }
.clock { width: 84px; margin-top: -2px; display: flex; flex-direction: column; align-items: flex-end; font-size: 14.500px; line-height: 20px; white-space: nowrap; }
.bell { margin-left: 11px; }
```
